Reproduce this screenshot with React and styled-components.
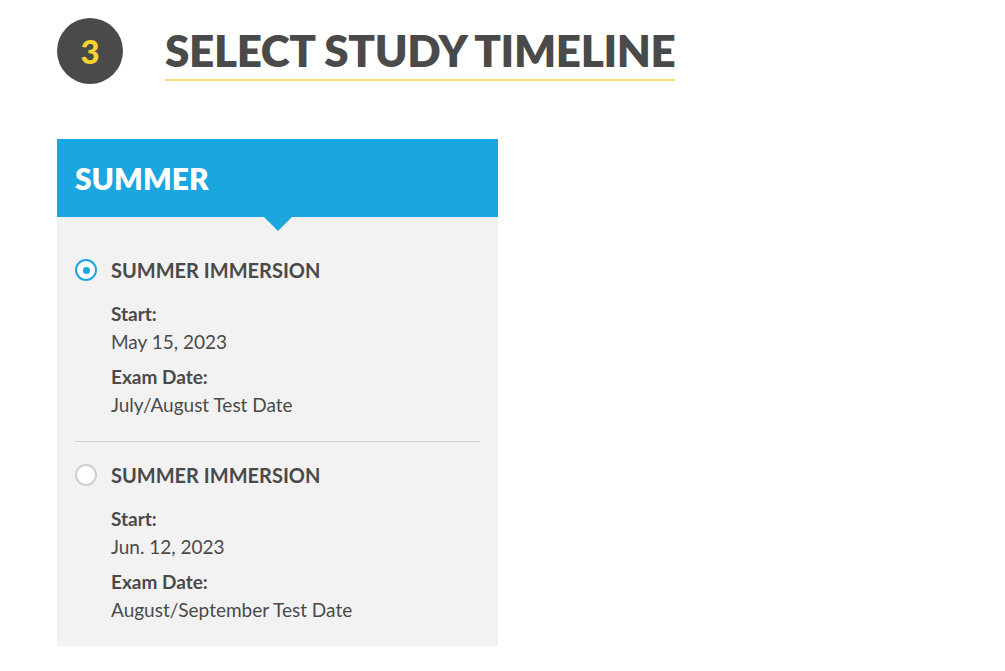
import React from 'react'
import styled, { createGlobalStyle } from 'styled-components'

const Global = createGlobalStyle`
  body {
    margin: 0;
    background: #fff;
    font-family: Lato, "Open Sans", Arial, sans-serif;
    color: #4a4a4a;
  }
`

const Page = styled.div`
  padding: 18px 0 0 57px;
`

const StepRow = styled.div`
  display: flex;
  align-items: center;
  gap: 42px;
`

const StepBadge = styled.div`
  width: 66px;
  height: 66px;
  border-radius: 50%;
  background: #4a4a4a;
  color: #f6d22f;
  display: flex;
  align-items: center;
  justify-content: center;
  font-size: 33px;
  font-weight: 900;
`

const Title = styled.h1`
  margin: 0;
  padding-top: 4px;
  font-size: 44px;
  font-weight: 800;
  letter-spacing: -0.35px;
  line-height: 48px;
  color: #4a4a4a;
  border-bottom: 2px solid #f5dd7a;
  padding-bottom: 5px;
`

const Card = styled.div`
  margin-top: 55px;
  width: 441px;
  background: #f2f2f2;
`

const CardHeader = styled.div`
  position: relative;
  height: 78px;
  background: #1ba6df;
  display: flex;
  align-items: center;
  padding-left: 18px;
  color: #fff;
  font-size: 30px;
  font-weight: 800;

  &::after {
    content: '';
    position: absolute;
    left: 50%;
    bottom: -14px;
    transform: translateX(-50%);
    border-left: 14px solid transparent;
    border-right: 14px solid transparent;
    border-top: 14px solid #1ba6df;
  }
`

const List = styled.div`
  padding: 0 18px;
`

const Option = styled.div`
  padding: ${p => (p.first ? '40px' : '20px')} 0 22px;
  border-bottom: ${p => (p.last ? 'none' : '1px solid #d2d2d2')};
`

const OptionHead = styled.label`
  display: flex;
  align-items: center;
  gap: 14px;
  font-size: 20px;
  font-weight: 700;
  color: #4a4a4a;
  line-height: 26px;
`

const Radio = styled.span`
  width: 18px;
  height: 18px;
  border-radius: 50%;
  border: 2px solid ${p => (p.checked ? '#1ba6df' : '#cfcfcf')};
  background: #fff;
  display: flex;
  align-items: center;
  justify-content: center;
  flex-shrink: 0;

  &::after {
    content: '';
    width: 7px;
    height: 7px;
    border-radius: 50%;
    background: ${p => (p.checked ? '#1ba6df' : 'transparent')};
  }
`

const Details = styled.div`
  padding-left: 36px;
  margin-top: 17px;
`

const Label = styled.div`
  font-size: 19px;
  font-weight: 700;
  line-height: 28px;
  margin-top: ${p => (p.gap ? '7px' : '0')};
`

const Value = styled.div`
  font-size: 19px;
  font-weight: 400;
  line-height: 28px;
`

const options = [
  { name: 'SUMMER IMMERSION', start: 'May 15, 2023', exam: 'July/August Test Date', checked: true },
  { name: 'SUMMER IMMERSION', start: 'Jun. 12, 2023', exam: 'August/September Test Date', checked: false },
]

export default function App() {
  return (
    <Page>
      <Global />
      <StepRow>
        <StepBadge>3</StepBadge>
        <Title>SELECT STUDY TIMELINE</Title>
      </StepRow>
      <Card>
        <CardHeader>SUMMER</CardHeader>
        <List>
          {options.map((o, i) => (
            <Option key={i} first={i === 0} last={i === options.length - 1}>
              <OptionHead>
                <Radio checked={o.checked} />
                {o.name}
              </OptionHead>
              <Details>
                <Label>Start:</Label>
                <Value>{o.start}</Value>
                <Label gap>Exam Date:</Label>
                <Value>{o.exam}</Value>
              </Details>
            </Option>
          ))}
        </List>
      </Card>
    </Page>
  )
}
